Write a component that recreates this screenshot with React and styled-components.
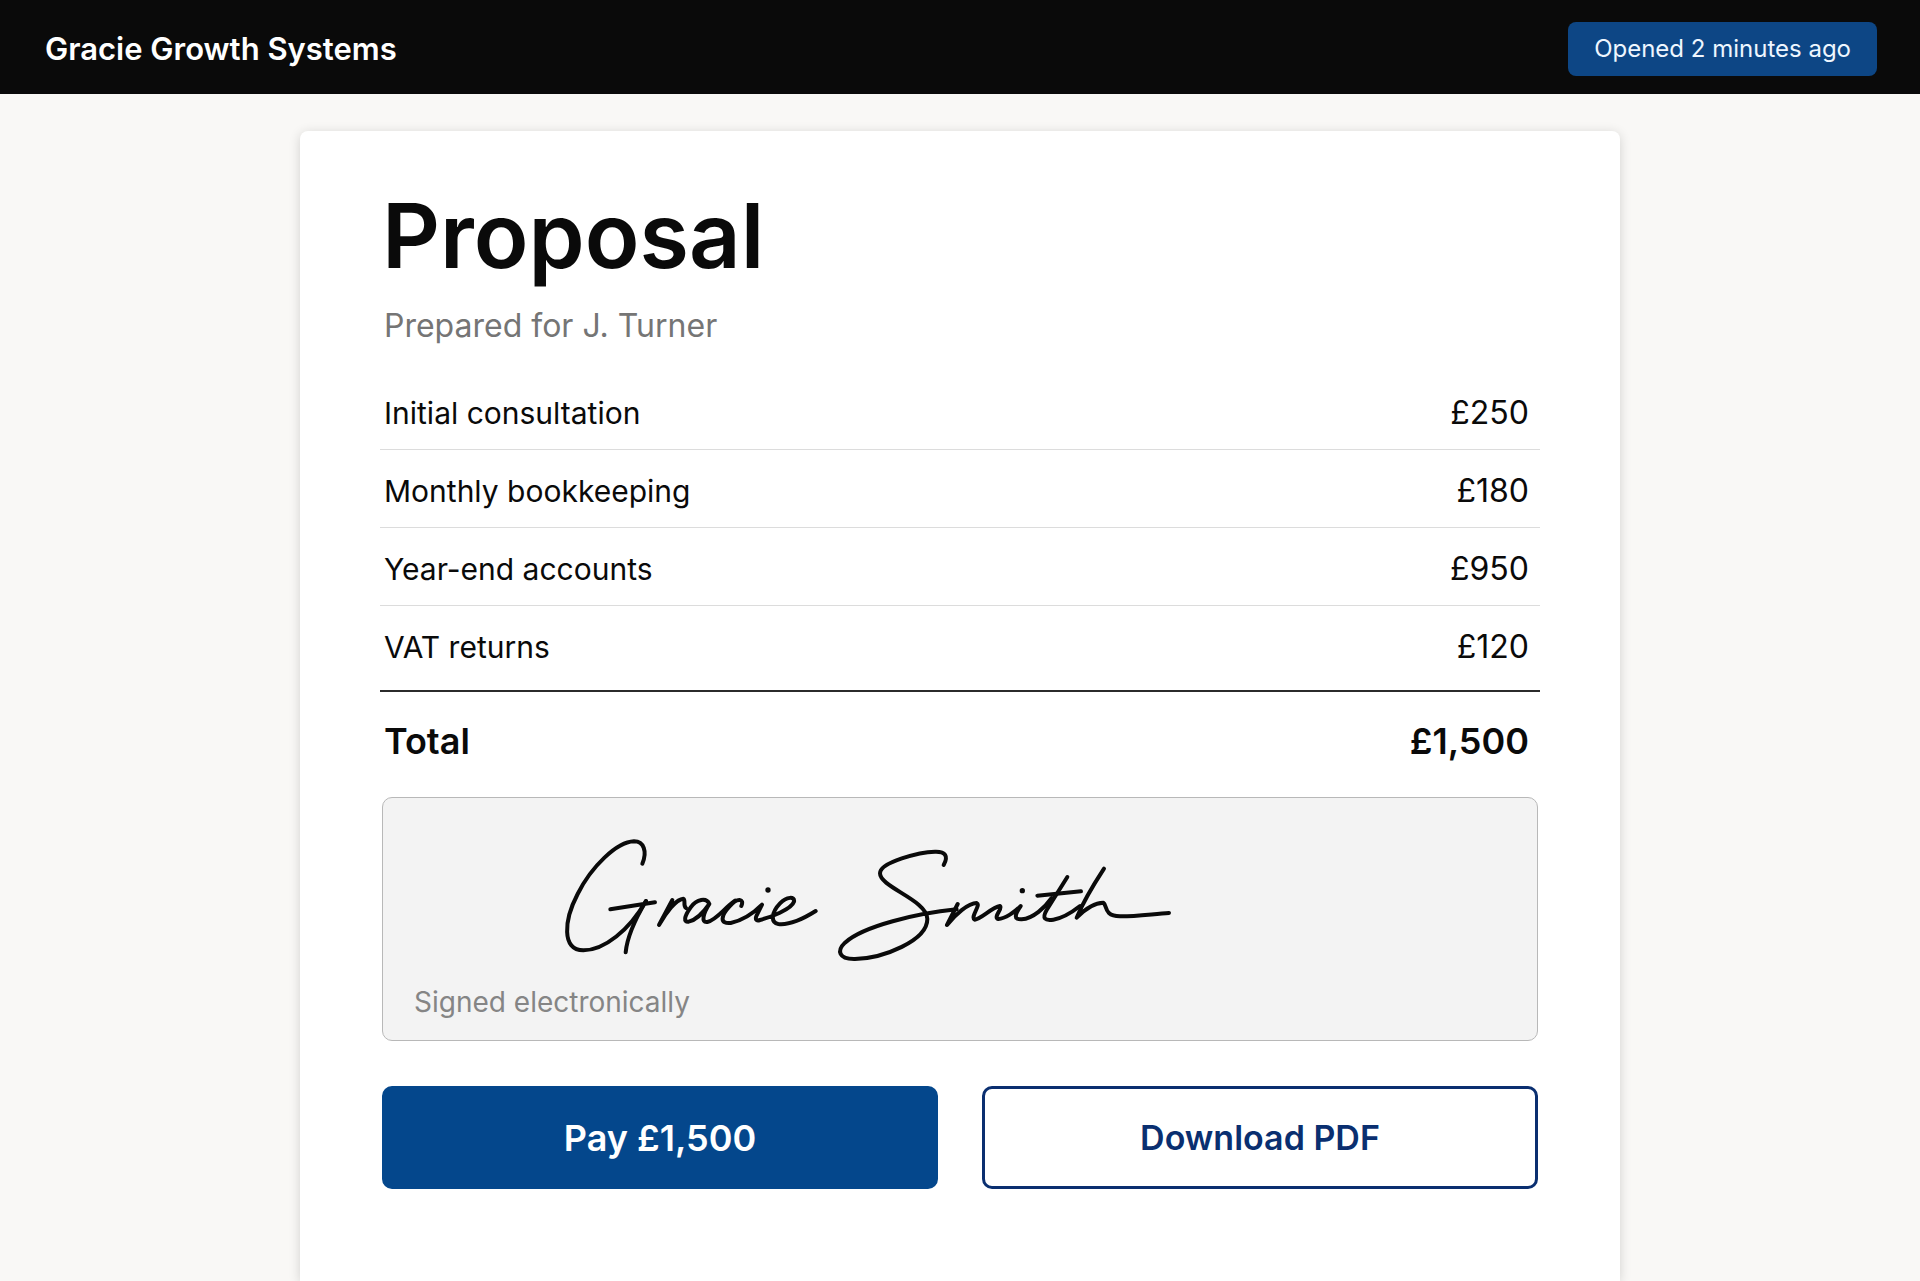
import React from 'react';
import styled, {createGlobalStyle, css} from 'styled-components';

const ink = '#0a0a0a';
const white = '#ffffff';
const blue = '#04478c';
const navy = '#0a2f70';
const muted = '#757575';

const semibold = css`
  font-weight: 600;
`;

const GlobalStyle = createGlobalStyle`
  * {
    box-sizing: border-box;
  }
  body {
    margin: 0;
    background-color: #f9f8f6;
    color: ${ink};
    font-family: Inter, 'Liberation Sans', sans-serif;
  }
`;

const Page = styled.div`
  min-height: 100vh;
  display: flex;
  flex-direction: column;
`;

const Header = styled.header`
  display: flex;
  align-items: center;
  justify-content: space-between;
  padding: 22px 43px 18px 45px;
  background-color: ${ink};
`;

const Brand = styled.span`
  color: ${white};
  font-size: 31px;
  line-height: 54px;
  ${semibold};
`;

const Status = styled.span`
  padding: 0 26px;
  border-radius: 8px;
  background-color: #0d4685;
  color: #eef6ff;
  font-size: 24px;
  line-height: 54px;
`;

const Sheet = styled.main`
  flex: 1;
  width: calc(100% - 600px);
  min-width: 800px;
  margin: 37px auto 0;
  padding: 49px 80px 80px;
  border-radius: 8px 8px 0 0;
  background-color: ${white};
  box-shadow: 0 2px 12px rgba(0, 0, 0, 0.16);
`;

const Title = styled.h1`
  margin: 0;
  padding-left: 2px;
  font-size: 90px;
  line-height: 112px;
  ${semibold};
`;

const Subtitle = styled.p`
  margin: 12px 0 24px;
  padding-left: 4px;
  color: ${muted};
  font-size: 32px;
  line-height: 44px;
`;

const Items = styled.table`
  width: 100%;
  border-collapse: separate;
  border-spacing: 0;
  line-height: 40px;
`;

const Row = styled.tr`
  th,
  td {
    padding: 21px 11px 16px 4px;
    border-bottom: 1px solid #dcdcdc;
    font-size: 30px;
    font-weight: 400;
    text-align: left;
  }
  td {
    font-size: 32px;
    text-align: right;
  }
  &:last-child th,
  &:last-child td {
    padding-bottom: 23px;
    border-bottom: 2px solid #2b2b2b;
  }
`;

const TotalRow = styled.tr`
  font-size: 36px;
  th,
  td {
    padding: 29px 11px 36px 4px;
    text-align: left;
    ${semibold};
  }
  td {
    text-align: right;
  }
`;

const SignatureBox = styled.section`
  margin: 0 2px;
  padding: 34px 31px 20px;
  border: 1px solid #b8b8b8;
  border-radius: 10px;
  background-color: #f3f3f3;
`;

const SignatureMark = styled.svg`
  display: block;
  width: 620px;
  height: 134px;
  margin-left: 146px;
`;

const SignatureNote = styled.p`
  margin: 18px 0 0;
  color: #858585;
  font-size: 28px;
  line-height: 36px;
`;

const Actions = styled.div`
  display: grid;
  grid-template-columns: 1fr 1fr;
  gap: 44px;
  margin: 45px 2px 0;
`;

const Button = styled.button`
  height: 103px;
  padding: 0 20px;
  border: 3px solid ${(props) => (props.$outline ? navy : blue)};
  border-radius: 10px;
  background-color: ${(props) => (props.$outline ? white : blue)};
  color: ${(props) => (props.$outline ? navy : white)};
  font-family: inherit;
  font-size: ${(props) => (props.$outline ? '34px' : '36px')};
  line-height: 44px;
  ${semibold};
  cursor: pointer;
`;

const items = [
  {name: 'Initial consultation', price: '£250'},
  {name: 'Monthly bookkeeping', price: '£180'},
  {name: 'Year-end accounts', price: '£950'},
  {name: 'VAT returns', price: '£120'},
];

function Signature() {
  return (
    <SignatureMark viewBox='60 36 1860 402' role='img' aria-label='Signature'>
      <g fill='none' stroke={ink} strokeWidth='12' strokeLinecap='round' strokeLinejoin='round'>
        <path d='M307 131C322 95 312 64 282 64C230 66 154 140 113 222C72 300 64 391 130 391C193 391 268 330 318 243' />
        <path d='M318 243C290 290 262 345 257 397M211 268L345 247' />
        <path d='M397 240L357 315C378 278 408 238 430 236C438 240 428 256 438 264' />
        <path d='M508 252C500 232 470 236 452 262C432 290 430 307 446 305C468 300 490 278 508 252C490 280 482 309 502 306C530 300 555 262 585 242' />
        <path d='M604 258C614 236 592 232 570 258C540 290 540 312 572 309C605 302 640 280 666 254L650 286C645 298 648 304 660 300C690 292 755 268 762 245C765 228 740 230 720 250C695 276 690 308 715 312C750 316 800 290 827 273' />
        <path d='M1211 135C1226 108 1216 94 1185 95C1140 96 1020 126 1020 160C1020 202 1162 240 1162 297C1162 362 1030 415 945 417C895 418 890 392 915 368C970 318 1130 280 1250 268' />
        <path d='M1253 252L1221 315C1245 284 1285 249 1310 249C1324 255 1290 290 1304 299C1325 296 1355 262 1380 258C1390 264 1358 292 1375 297C1395 296 1425 276 1442 258C1424 284 1420 299 1445 298C1480 296 1515 262 1535 234' />
        <path d='M1582 171L1520 270C1505 296 1515 303 1540 299C1570 294 1592 280 1620 258' />
        <path d='M1492 227L1623 214M1692 146C1660 195 1630 245 1610 293C1640 262 1665 248 1690 248C1702 255 1690 288 1740 289C1780 290 1840 282 1887 279' />
      </g>
      <circle cx='684' cy='210' r='8' fill={ink} />
      <circle cx='1447' cy='212' r='8' fill={ink} />
    </SignatureMark>
  );
}

export default function App() {
  return (
    <Page>
      <GlobalStyle />
      <Header>
        <Brand>Gracie Growth Systems</Brand>
        <Status>Opened 2 minutes ago</Status>
      </Header>
      <Sheet>
        <Title>Proposal</Title>
        <Subtitle>Prepared for J. Turner</Subtitle>
        <Items>
          <tbody>
            {items.map((item) =>
              <Row key={item.name}>
                <th scope='row'>{item.name}</th>
                <td>{item.price}</td>
              </Row>
            )}
          </tbody>
          <tfoot>
            <TotalRow>
              <th scope='row'>Total</th>
              <td>£1,500</td>
            </TotalRow>
          </tfoot>
        </Items>
        <SignatureBox>
          <Signature />
          <SignatureNote>Signed electronically</SignatureNote>
        </SignatureBox>
        <Actions>
          <Button type='button'>Pay £1,500</Button>
          <Button type='button' $outline>Download PDF</Button>
        </Actions>
      </Sheet>
    </Page>
  );
}
